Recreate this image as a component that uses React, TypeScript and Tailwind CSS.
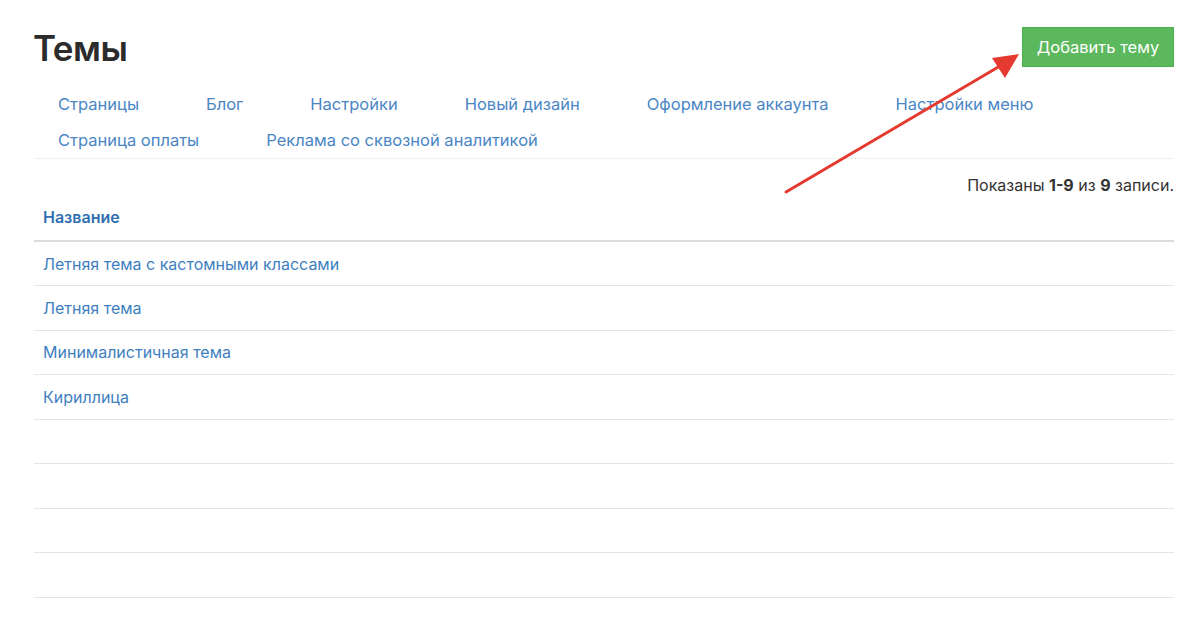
import React from 'react';

const TABS_ROW1 = ['Страницы', 'Блог', 'Настройки', 'Новый дизайн', 'Оформление аккаунта', 'Настройки меню'];
const TABS_ROW2 = ['Страница оплаты', 'Реклама со сквозной аналитикой'];

const ROWS = ['Летняя тема с кастомными классами', 'Летняя тема', 'Минималистичная тема', 'Кириллица', '', '', '', ''];

export default function App() {
  return (
    <div className="relative w-[1200px] h-[636px] overflow-hidden bg-white text-[#333]" style={{ fontFamily: 'Inter, "Noto Sans", sans-serif' }}>
      <div className="pl-[34px] pr-[26px] pt-[27px] w-[1200px]">
        {/* Header */}
        <div className="flex items-start justify-between">
          <h1 className="text-[35px] leading-[42px] font-semibold text-[#2b2b2b] tracking-[-0.5px] -ml-[1px]">Темы</h1>
          <button className="h-[40px] w-[152px] bg-[#5cb85c] text-white text-[16.5px] border border-[#4cae4c]">
            Добавить тему
          </button>
        </div>

        {/* Tabs */}
        <div className="mt-[17px] border-b border-[#f0f0f0]">
          <div className="flex pl-[24px] gap-x-[67px] h-[36px] items-center">
            {TABS_ROW1.map(t => (
              <a key={t} className="text-[16.5px] text-[#4a86c5]">{t}</a>
            ))}
          </div>
          <div className="flex pl-[24px] gap-x-[67px] h-[36px] items-center">
            {TABS_ROW2.map(t => (
              <a key={t} className="text-[16.5px] text-[#4a86c5]">{t}</a>
            ))}
          </div>
        </div>

        {/* Summary */}
        <div className="text-right text-[16px] mt-[15px] leading-[22px]">
          Показаны <b className="font-bold">1-9</b> из <b className="font-bold">9</b> записи.
        </div>

        {/* Table */}
        <table className="w-full mt-[1px] text-[16px]">
          <thead>
            <tr className="border-b-2 border-[#dddddd]">
              <th className="text-left font-semibold text-[#2f6fb0] px-[9px] pt-[9px] pb-[12px] leading-[22px]">Название</th>
            </tr>
          </thead>
          <tbody>
            {ROWS.map((r, i) => (
              <tr key={i} className="border-b border-[#e4e4e4]">
                <td className="px-[9px] h-[44.5px] text-[#3e7fc0] leading-[22px]">{r}</td>
              </tr>
            ))}
          </tbody>
        </table>
      </div>

      {/* Annotation arrow */}
      <svg className="absolute left-0 top-0 pointer-events-none" width="1200" height="636">
        <line x1="786" y1="192" x2="1000" y2="66" stroke="#e53a2f" strokeWidth="3" strokeLinecap="round" />
        <polygon points="1019,54 992,58 1005,78" fill="#e53a2f" />
      </svg>
    </div>
  );
}
